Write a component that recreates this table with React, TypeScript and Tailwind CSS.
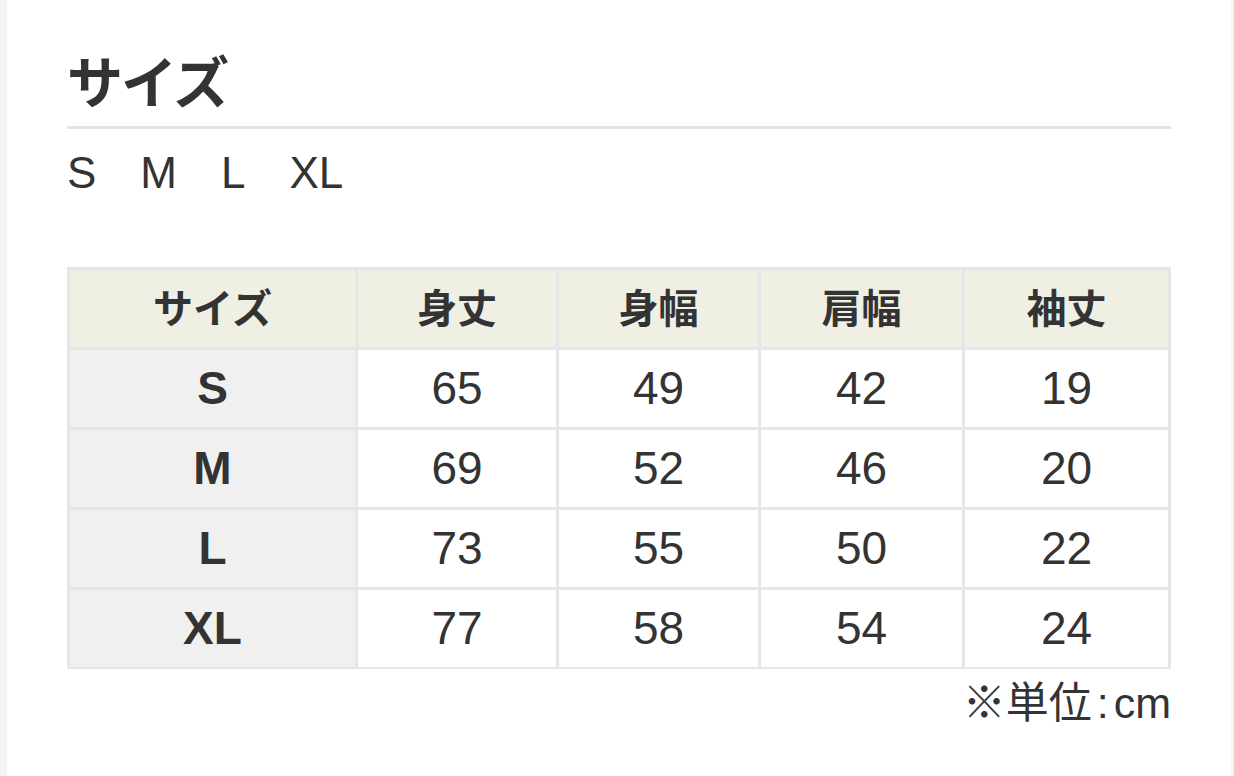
import React from "react";

const headers = ["サイズ", "身丈", "身幅", "肩幅", "袖丈"];
const rows: [string, number, number, number, number][] = [
  ["S", 65, 49, 42, 19],
  ["M", 69, 52, 46, 20],
  ["L", 73, 55, 50, 22],
  ["XL", 77, 58, 54, 24],
];

const font = { fontFamily: '"Liberation Sans", "Noto Sans CJK JP", sans-serif' };

export default function App() {
  return (
    <div className="flex h-[776px] w-[1234px] bg-white text-[#333333]" style={font}>
      <div className="w-[7px] bg-[#f4f4f4]" />
      <div className="flex-1 pl-[60px] pr-[60px]">
        <h1 className="pt-[52px] text-[56px] font-bold leading-[64px] tracking-[-2px]">サイズ</h1>
        <div className="mt-[10px] h-[3px] w-[1104px] bg-[#e2e2e2]" />
        <div className="mt-[20px] flex gap-[44px] text-[44px] leading-[48px]">
          <span>S</span>
          <span>M</span>
          <span>L</span>
          <span>XL</span>
        </div>
        <div className="mt-[70px] grid w-[1104px] grid-cols-[285px_198px_199px_201px_203px] grid-rows-[repeat(5,77px)] gap-[3px] bg-[#e6e6e6] p-[3px] pb-[2px]">
          {headers.map((h) => (
            <div key={h} className="flex items-center justify-center bg-[#efefe3] text-[40px] font-bold">
              {h}
            </div>
          ))}
          {rows.map((r) => (
            <React.Fragment key={r[0]}>
              <div className="flex items-center justify-center bg-[#f0f0f0] text-[46px] font-bold">{r[0]}</div>
              {r.slice(1).map((v, i) => (
                <div key={i} className="flex items-center justify-center bg-white text-[46px]">
                  {v}
                </div>
              ))}
            </React.Fragment>
          ))}
        </div>
        <div className="mt-[10px] w-[1104px] text-right text-[43px] leading-[48px]">
          ※単位<span className="px-[5px]">:</span>cm
        </div>
      </div>
      <div className="w-[3px] bg-[#f4f4f4]" />
    </div>
  );
}
